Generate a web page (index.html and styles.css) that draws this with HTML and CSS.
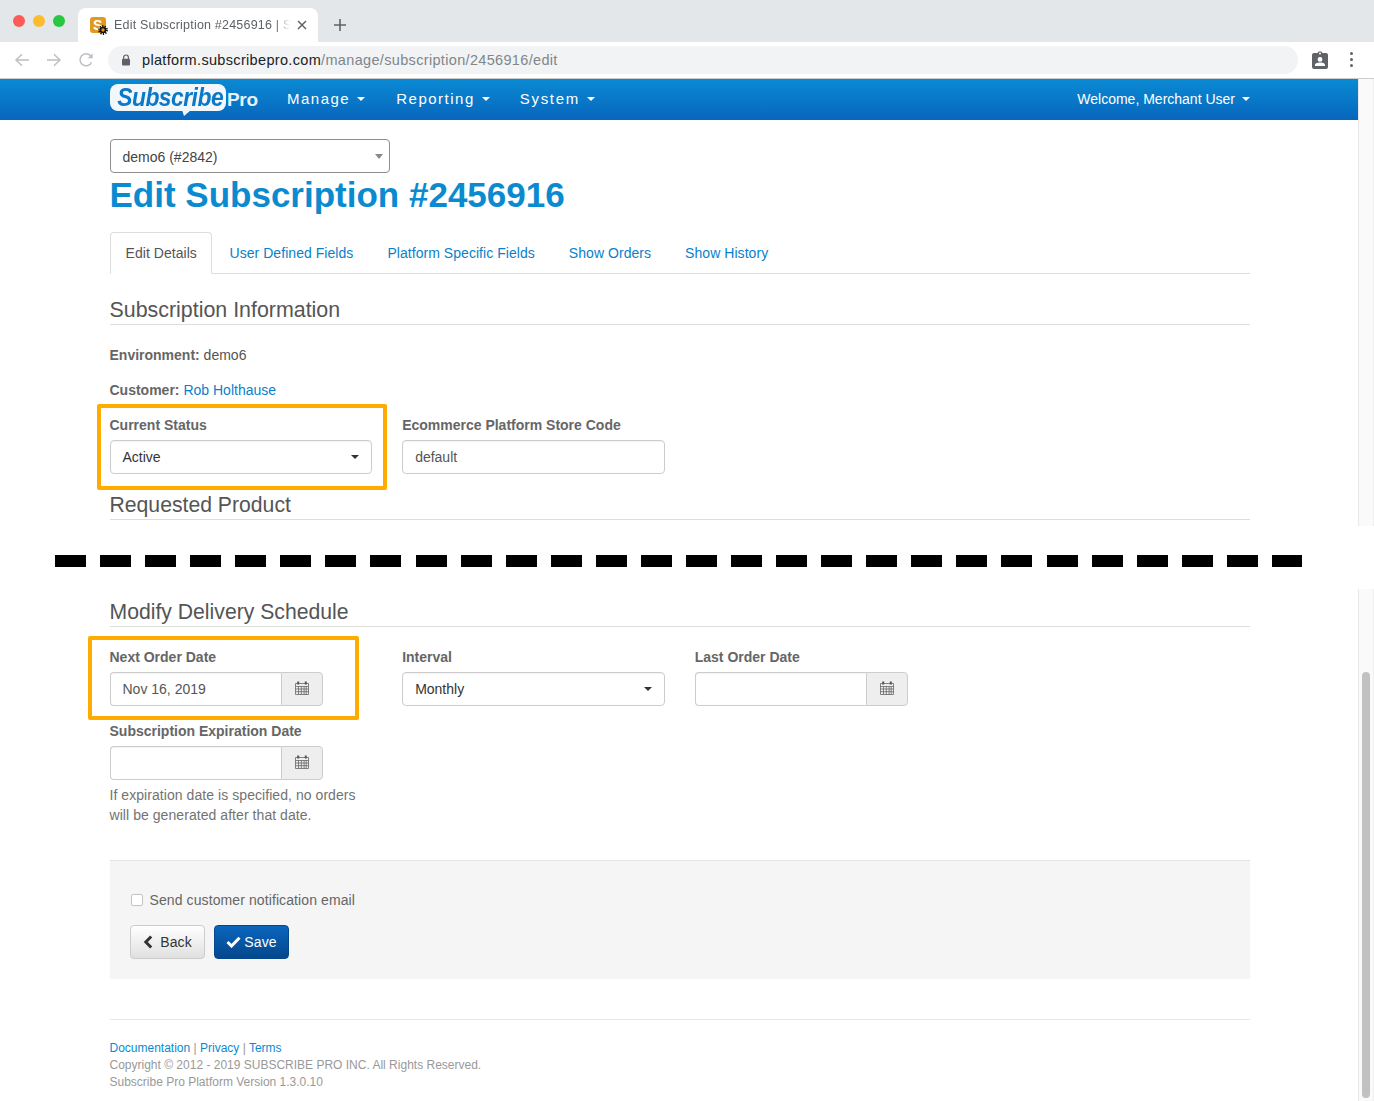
FILE: index.html
```html
<!DOCTYPE html>
<html lang="en">
<head>
<meta charset="utf-8">
<title>Edit Subscription #2456916</title>
<link rel="stylesheet" href="styles.css">
</head>
<body>
<div class="window">
  <header class="chrome">
    <div class="tabstrip">
      <div class="lights"><i class="light red"></i><i class="light yellow"></i><i class="light green"></i></div>
      <div class="tab">
        <span class="favicon"><b>S</b><svg class="gear" width="10" height="10" viewBox="0 0 10 10"><circle cx="5" cy="5" r="4" fill="none" stroke="#111" stroke-width="1.800" stroke-dasharray="1.300 1.200"/><circle cx="5" cy="5" r="2.500" fill="#e09a22" stroke="#111" stroke-width="1.600"/></svg></span>
        <span class="tab-title">Edit Subscription #2456916 | S</span>
        <svg class="tab-close" width="10" height="10" viewBox="0 0 10 10"><path d="M1 1l8 8M9 1l-8 8" stroke="#5f6368" stroke-width="1.5" fill="none"/></svg>
      </div>
      <svg class="new-tab" width="12" height="12" viewBox="0 0 12 12"><path d="M6 0v12M0 6h12" stroke="#5f6368" stroke-width="1.6" fill="none"/></svg>
    </div>
    <div class="toolbar">
      <svg class="tool" width="16" height="16" viewBox="0 0 16 16"><path d="M15 8H2M8 2.200 2 8l6 5.800" stroke="#bcc0c4" stroke-width="1.5" fill="none"/></svg>
      <svg class="tool" width="16" height="16" viewBox="0 0 16 16"><path d="M1 8h13M8 2.200 14 8l-6 5.800" stroke="#bcc0c4" stroke-width="1.5" fill="none"/></svg>
      <svg class="tool" width="16" height="16" viewBox="0 0 16 16"><path d="M13.600 10.200A6 6 0 1 1 12.400 3.600L14 5.200" stroke="#bcc0c4" stroke-width="1.5" fill="none"/><path d="M14.600 1.200v5h-5z" fill="#bcc0c4"/></svg>
      <div class="omnibox">
        <svg class="lock" width="10" height="12" viewBox="0 0 10 12"><path d="M2.600 5V3.400a2.400 2.400 0 0 1 4.800 0V5" stroke="#5f6368" stroke-width="1.200" fill="none"/><rect x="1" y="4.800" width="8" height="6.600" rx="1" fill="#5f6368"/></svg>
        <span class="url"><span class="host">platform.subscribepro.com</span>/manage/subscription/2456916/edit</span>
      </div>
      <svg class="profile" width="16" height="18" viewBox="0 0 16 18"><path fill-rule="evenodd" d="M2 2h3.600a2.500 2.500 0 0 1 4.800 0H14a2 2 0 0 1 2 2v12a2 2 0 0 1-2 2H2a2 2 0 0 1-2-2V4a2 2 0 0 1 2-2zm6-.6a1 1 0 1 0 0 2 1 1 0 0 0 0-2zM8 6a2.400 2.400 0 1 0 0 4.800A2.400 2.400 0 0 0 8 6zm-5 9h10v-1.200c0-1.600-3.300-2.300-5-2.300s-5 .7-5 2.300z" fill="#5f6368"/></svg>
      <span class="dots"><i></i><i></i><i></i></span>
    </div>
  </header>

  <div class="viewport">
    <div class="page">
      <nav class="navbar">
        <a class="logo"><span class="logo-badge"><span class="logo-word">Subscribe</span></span><span class="logo-pro">Pro</span></a>
        <a class="nav-item">Manage<i class="caret"></i></a>
        <a class="nav-item">Reporting<i class="caret"></i></a>
        <a class="nav-item">System<i class="caret"></i></a>
        <a class="nav-user">Welcome, Merchant User<i class="caret"></i></a>
      </nav>

      <main class="content">
        <div class="env-select">demo6 (#2842)<i class="caret-gray"></i></div>
        <h1 class="page-title">Edit Subscription #2456916</h1>

        <ul class="tabs">
          <li class="tab-link active">Edit Details</li>
          <li class="tab-link">User Defined Fields</li>
          <li class="tab-link">Platform Specific Fields</li>
          <li class="tab-link">Show Orders</li>
          <li class="tab-link">Show History</li>
        </ul>

        <h3 class="section-title first">Subscription Information</h3>
        <p class="info first-info"><strong>Environment:</strong> demo6</p>
        <p class="info"><strong>Customer:</strong> <a class="link">Rob Holthause</a></p>

        <div class="form-row">
          <div class="field">
            <span class="frame frame-status"></span>
            <label class="label">Current Status</label>
            <div class="select">Active<i class="caret-dark"></i></div>
          </div>
          <div class="field">
            <label class="label">Ecommerce Platform Store Code</label>
            <input class="input" type="text" value="default">
          </div>
        </div>

        <h3 class="section-title product">Requested Product</h3>

        <div class="page-break"><div class="dashes"></div></div>

        <h3 class="section-title schedule">Modify Delivery Schedule</h3>

        <div class="form-row row-schedule">
          <div class="field">
            <span class="frame frame-date"></span>
            <label class="label">Next Order Date</label>
            <div class="date-group">
              <input class="input date-input" type="text" value="Nov 16, 2019">
              <span class="addon"><svg class="cal" width="14" height="14" viewBox="0 0 14 14"><path d="M.5 2.500h13v11H.5zM.5 5.500h13M.5 8h13M.5 10.700h13M3.500 5.500v8M6.300 5.500v8M9.100 5.500v8M11.200 5.500v8" fill="none" stroke="#666" stroke-width=".8"/><path d="M3.200.5v3M10.800.5v3" stroke="#555" stroke-width="2" fill="none"/></svg></span>
            </div>
          </div>
          <div class="field">
            <label class="label">Interval</label>
            <div class="select">Monthly<i class="caret-dark"></i></div>
          </div>
          <div class="field">
            <label class="label">Last Order Date</label>
            <div class="date-group">
              <input class="input date-input" type="text">
              <span class="addon"><svg class="cal" width="14" height="14" viewBox="0 0 14 14"><path d="M.5 2.500h13v11H.5zM.5 5.500h13M.5 8h13M.5 10.700h13M3.500 5.500v8M6.300 5.500v8M9.100 5.500v8M11.200 5.500v8" fill="none" stroke="#666" stroke-width=".8"/><path d="M3.200.5v3M10.800.5v3" stroke="#555" stroke-width="2" fill="none"/></svg></span>
            </div>
          </div>
        </div>

        <div class="form-row row-expiry">
          <div class="field">
            <label class="label">Subscription Expiration Date</label>
            <div class="date-group">
              <input class="input date-input" type="text">
              <span class="addon"><svg class="cal" width="14" height="14" viewBox="0 0 14 14"><path d="M.5 2.500h13v11H.5zM.5 5.500h13M.5 8h13M.5 10.700h13M3.500 5.500v8M6.300 5.500v8M9.100 5.500v8M11.200 5.500v8" fill="none" stroke="#666" stroke-width=".8"/><path d="M3.200.5v3M10.800.5v3" stroke="#555" stroke-width="2" fill="none"/></svg></span>
            </div>
            <p class="help">If expiration date is specified, no orders will be generated after that date.</p>
          </div>
        </div>

        <div class="well">
          <label class="check-row"><span class="checkbox"></span>Send customer notification email</label>
          <div class="actions">
            <button class="btn btn-back" type="button"><svg width="10" height="14" viewBox="0 0 10 14"><path d="M8.200 1.500 2.800 7l5.400 5.500" stroke="#333" stroke-width="3" fill="none"/></svg>Back</button>
            <button class="btn btn-save" type="button"><svg width="15" height="12" viewBox="0 0 15 12"><path d="M1.500 6 5.500 10l8-8.300" stroke="#fff" stroke-width="3" fill="none"/></svg>Save</button>
          </div>
        </div>

        <footer class="footer">
          <div><a class="foot-link">Documentation</a> | <a class="foot-link">Privacy</a> | <a class="foot-link">Terms</a></div>
          <div>Copyright © 2012 - 2019 SUBSCRIBE PRO INC. All Rights Reserved.</div>
          <div>Subscribe Pro Platform Version 1.3.0.10</div>
        </footer>
      </main>
    </div>
    <div class="scrollbar"><div class="thumb"></div></div>
  </div>
</div>
</body>
</html>
```

FILE: styles.css
```css
* { box-sizing: border-box; }
html, body { margin: 0; padding: 0; background: #fff; }
body { font-family: "Liberation Sans", Arial, sans-serif; font-size: 14px; line-height: 20px; color: #555; }
.window { width: 1374px; height: 1101px; overflow: hidden; display: flex; flex-direction: column; }

/* browser chrome */
.chrome { flex: none; height: 79px; }
.tabstrip { height: 42px; background: #e4e7ea; display: flex; align-items: flex-end; padding-left: 13px; }
.lights { display: flex; gap: 8px; align-self: flex-start; margin-top: 15px; width: 65px; }
.light { width: 12px; height: 12px; border-radius: 50%; }
.red { background: #fd5b57; }
.yellow { background: #fdbc2e; }
.green { background: #27c840; }
.tab { width: 240px; height: 34px; background: #fff; border-radius: 8px 8px 0 0; display: flex; align-items: center; padding-left: 12px; }
.favicon { width: 16px; height: 16px; border-radius: 3px; background: #e09a22; position: relative; flex: none; margin-right: 8px; color: #fff; font-size: 14px; line-height: 16px; text-align: left; padding-left: 3px; }
.gear { position: absolute; right: -2px; bottom: -2px; }
.tab-title { width: 176px; white-space: nowrap; overflow: hidden; font-size: 12.500px; letter-spacing: .2px; color: #5f6368; -webkit-mask-image: linear-gradient(to right, #000 92%, transparent 100%); mask-image: linear-gradient(to right, #000 92%, transparent 100%); }
.tab-close { margin-left: 7px; }
.new-tab { align-self: flex-start; margin: 19px 0 0 16px; }
.toolbar { height: 37px; background: #fff; border-bottom: 1px solid #ccc; display: flex; align-items: center; padding: 0 0 1px 14px; }
.tool { margin-right: 16px; flex: none; }
.omnibox { width: 1190px; height: 28px; margin-left: -2px; border-radius: 14px; background: #f1f3f4; display: flex; align-items: center; padding-left: 13px; }
.lock { margin-right: 11px; }
.url { font-size: 14.500px; color: #80868b; letter-spacing: .33px; white-space: nowrap; }
.host { color: #202124; }
.profile { margin-left: 14px; }
.dots { display: flex; flex-direction: column; gap: 3px; margin-left: 22px; }
.dots i { width: 3px; height: 3px; border-radius: 50%; background: #5f6368; }

/* page */
.viewport { position: relative; flex: 1; overflow: hidden; }
.page { width: 1358px; }
.navbar { height: 41px; background: linear-gradient(#0a8ad3, #0866bd); display: flex; align-items: center; padding: 0 108px 2px 110px; color: #fff; }
.logo { width: 147px; height: 39px; display: flex; position: relative; }
.logo-badge { width: 116px; height: 27px; margin-top: 5px; background: #f2f7fb; border-radius: 8px; color: #0b78c8; position: relative; text-align: center; }
.logo-word { display: inline-block; font-size: 26px; line-height: 27px; font-weight: 700; font-style: italic; letter-spacing: -.6px; transform: scaleX(.88); }
.logo-badge::after { content: ""; position: absolute; left: 72px; top: 26px; border-left: 2px solid transparent; border-right: 7px solid transparent; border-top: 6px solid #f2f7fb; }
.logo-pro { margin: 10px 0 0 1px; font-size: 19px; line-height: 22px; font-weight: 700; color: #e6f1fa; letter-spacing: -.300px; }
.nav-item { margin-left: 30px; font-size: 15px; letter-spacing: 1.500px; display: flex; align-items: center; }
.nav-item:nth-child(3) { margin-left: 31px; }
.nav-item:nth-child(4) { margin-left: 30px; letter-spacing: 1.700px; }
.nav-user { margin-left: auto; display: flex; align-items: center; }
.caret { margin-left: 7px; border-top: 4px solid #fff; border-left: 4px solid transparent; border-right: 4px solid transparent; }
.content { width: 1140.500px; margin-left: 109.500px; padding-top: 19px; }

.env-select { width: 280px; height: 34px; border: 1px solid #8e8e8e; border-radius: 4px; padding: 0 12px; line-height: 35px; color: #444; position: relative; }
.caret-gray { position: absolute; right: 6px; top: 14px; border-top: 5px solid #888; border-left: 4px solid transparent; border-right: 4px solid transparent; }
.page-title { margin: 0 0 15px; height: 44px; font-size: 35px; line-height: 44px; font-weight: 700; color: #0a8bd0; }

.tabs { list-style: none; margin: 0; padding: 0; height: 42px; display: flex; border-bottom: 1px solid #ddd; letter-spacing: .05px; }
.tab-link { height: 42px; padding: 0 15px; line-height: 42px; color: #0a7fcb; margin-right: 4px; white-space: nowrap; }
.tab-link.active { width: 102px; margin-right: 3px; color: #555; border: 1px solid #ddd; border-bottom-color: #fff; border-radius: 4px 4px 0 0; line-height: 40px; }

.section-title { margin: 0; height: 30px; font-size: 21.200px; line-height: 30px; font-weight: 400; color: #555; border-bottom: 1px solid #ddd; }
.section-title.first { margin-top: 21px; font-size: 21.400px; }
.section-title.product { margin-top: 16px; }
.section-title.schedule { margin-top: 8px; }

.info { margin: 15px 0 0; }
.first-info { margin-top: 20px; }
.info strong, .label { font-weight: 700; color: #666; }
.link { color: #0a7fcb; }

.form-row { display: grid; grid-template-columns: repeat(4, 1fr); column-gap: 30px; margin-top: 15px; }
.row-schedule { margin-top: 20px; }
.field { position: relative; }
.label { display: block; margin-bottom: 5px; white-space: nowrap; }
.frame { position: absolute; border: 4px solid #ffab00; border-radius: 2px; pointer-events: none; }
.frame-status { left: -12.500px; top: -11px; width: 290px; height: 86px; }
.frame-date { left: -21.500px; top: -11px; width: 271px; height: 84px; }
.select, .input { display: block; width: 100%; height: 34px; border: 1px solid #ccc; border-radius: 4px; padding: 0 12px; font: 14px/32px "Liberation Sans", Arial, sans-serif; background: #fff; box-shadow: inset 0 1px 1px rgba(0,0,0,.05); outline: none; }
.select { color: #333; position: relative; }
.input { color: #555; }
.caret-dark { position: absolute; right: 12px; top: 14px; border-top: 4px solid #333; border-left: 4px solid transparent; border-right: 4px solid transparent; }
.date-group { width: 213.500px; display: flex; }
.date-input { flex: 1; min-width: 0; border-radius: 4px 0 0 4px; border-right: 0; }
.addon { width: 42px; height: 34px; flex: none; border: 1px solid #ccc; border-radius: 0 4px 4px 0; background: #eee; display: flex; align-items: center; justify-content: center; padding: 0 1px 2px 0; }
.help { margin: 5px 0 0; color: #737373; letter-spacing: .06px; }

.page-break { position: relative; z-index: 1; width: 1374px; height: 63px; margin: 6px 0 0 -109.500px; padding: 29px 0 0 55px; background: #fff; }
.dashes { width: 1247px; height: 12px; background: repeating-linear-gradient(to right, #000 0, #000 31px, transparent 31px, transparent 45.070px); }

.well { height: 119px; margin-top: 35px; padding: 29px 20px 0; background: #f5f5f5; border-top: 1px solid #e3e3e3; }
.check-row { display: flex; align-items: center; color: #666; letter-spacing: .1px; }
.checkbox { width: 12px; height: 12px; margin: 0 7px 0 1px; border: 1px solid #c4c4c4; border-radius: 2px; background: #fff; }
.actions { display: flex; gap: 9px; margin-top: 15px; }
.btn { width: 75px; height: 34px; border-radius: 4px; font: 14px/20px "Liberation Sans", Arial, sans-serif; display: flex; align-items: center; justify-content: center; padding: 0; letter-spacing: .1px; }
.btn-back { gap: 7px; padding-left: 1px; color: #333; border: 1px solid #ccc; background: linear-gradient(#fff, #e0e0e0); }
.btn-save { gap: 3px; padding-left: 1px; color: #fff; border: 1px solid #04478c; background: linear-gradient(#0a66bd, #04478c); }

.footer { margin-top: 40px; padding-top: 20px; border-top: 1px solid #e8e8e8; font-size: 12px; line-height: 17px; color: #999; }
.foot-link { color: #0a8bd0; }

.scrollbar { position: absolute; top: 0; bottom: 0; right: 0; width: 16px; background: #fafafa; border-left: 1px solid #e8e8e8; border-right: 1px solid #f0f0f0; }
.thumb { position: absolute; left: 3px; top: 593px; bottom: 3px; width: 8px; border-radius: 4px; background: #c1c1c1; }
```
